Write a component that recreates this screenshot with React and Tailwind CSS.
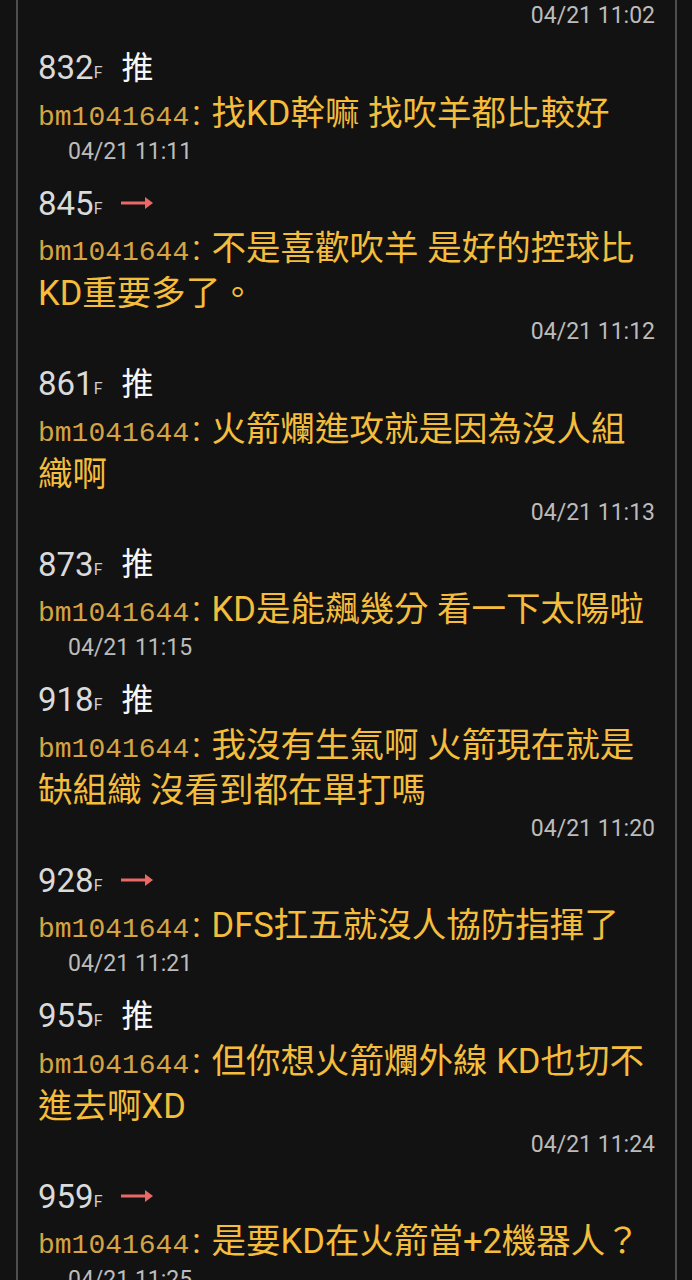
const comments = [
  { floor: 832, tag: 'push', lines: ['找KD幹嘛 找吹羊都比較好'], time: '04/21 11:11' },
  { floor: 845, tag: 'arrow', lines: ['不是喜歡吹羊 是好的控球比', 'KD重要多了。'], time: '04/21 11:12' },
  { floor: 861, tag: 'push', lines: ['火箭爛進攻就是因為沒人組', '織啊'], time: '04/21 11:13' },
  { floor: 873, tag: 'push', lines: ['KD是能飆幾分 看一下太陽啦'], time: '04/21 11:15' },
  { floor: 918, tag: 'push', lines: ['我沒有生氣啊 火箭現在就是', '缺組織 沒看到都在單打嗎'], time: '04/21 11:20' },
  { floor: 928, tag: 'arrow', lines: ['DFS扛五就沒人協防指揮了'], time: '04/21 11:21' },
  { floor: 955, tag: 'push', lines: ['但你想火箭爛外線 KD也切不', '進去啊XD'], time: '04/21 11:24' },
  { floor: 959, tag: 'arrow', lines: ['是要KD在火箭當+2機器人？'], time: '04/21 11:25' },
]

const sans = "font-['Roboto','Noto_Sans_CJK_TC',sans-serif]"

function Arrow() {
  return (
    <svg width="32" height="14" viewBox="0 0 32 14" className="block">
      <rect x="0" y="5.5" width="26" height="3" fill="#ea6866" />
      <polygon points="24,1 32,7 24,13" fill="#ea6866" />
    </svg>
  )
}

function Comment({ c }) {
  const short = c.lines.length === 1
  return (
    <div className="pb-[13.5px]">
      <div className={`flex h-[46px] items-center ${sans}`}>
        <span className="text-[33px] leading-none text-[#dadada]">{c.floor}</span>
        <span className="mt-[11px] text-[16px] leading-none text-[#cfcfcf]">F</span>
        <span className="ml-[19px] flex items-center">
          {c.tag === 'push' ? (
            <span className="text-[32px] leading-none text-[#f6f6f6]">推</span>
          ) : (
            <Arrow />
          )}
        </span>
      </div>
      <div className={`text-[34.5px] text-[#f4bd3c] ${sans}`}>
        {c.lines.map((line, i) => (
          <div key={i} className="h-[45px] overflow-visible whitespace-nowrap leading-[45px]">
            {i === 0 ? (
              <>
                <span className="font-['Liberation_Mono',monospace] text-[28px] text-[#d6a443]">bm1041644</span>
                <span className="ml-[3px] mr-[11px]">:</span>
              </>
            ) : null}
            {line}
          </div>
        ))}
      </div>
      <div
        className={`h-[31px] text-[23px] leading-[31px] text-[#bcbcbc] ${sans} ${
          short ? 'pl-[30px]' : 'text-right'
        }`}
      >
        {c.time}
      </div>
    </div>
  )
}

export default function App() {
  return (
    <div className="h-[1280px] overflow-hidden bg-[#121212] pl-[16px]">
      <div className="min-h-full w-[661px] border-x-2 border-[#4e4e4e] bg-[#121212] px-[20px]">
        <div className={`h-[31px] text-right text-[23px] leading-[31px] text-[#bcbcbc] ${sans}`}>
          04/21 11:02
        </div>
        <div className="h-[13.5px]" />
        {comments.map((c) => (
          <Comment key={c.floor} c={c} />
        ))}
      </div>
    </div>
  )
}
